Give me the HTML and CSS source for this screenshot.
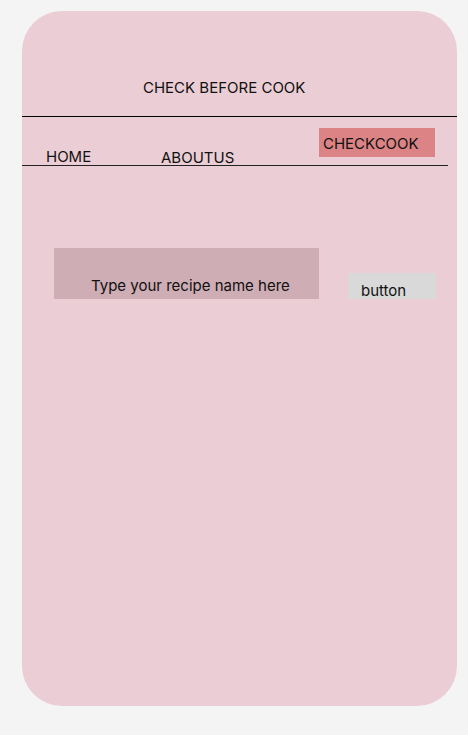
FILE: index.html
```html
<!DOCTYPE html>
<html>
<head>
<meta charset="utf-8">
<link rel="stylesheet" href="styles.css">
</head>
<body>
<div class="card">
  <header class="header"><h1 class="title">CHECK BEFORE COOK</h1></header>
  <nav class="nav">
    <span class="nav-item home">HOME</span>
    <span class="nav-item about">ABOUTUS</span>
    <span class="nav-item check">CHECKCOOK</span>
  </nav>
  <main class="search">
    <div class="input">Type your recipe name here</div>
    <div class="button">button</div>
  </main>
</div>
</body>
</html>
```
FILE: styles.css
```css
html, body { margin: 0; padding: 0; }
body {
  background: #f4f4f4;
  padding: 11px 0 0 22px;
  font-family: Inter, "Noto Sans", sans-serif;
  font-size: 15px;
  line-height: 20px;
  color: #111;
}
.card {
  width: 435px;
  height: 695px;
  border-radius: 40px;
  background: #ebcdd5;
  overflow: hidden;
}
.header {
  height: 105px;
  box-sizing: content-box;
  border-bottom: 1px solid #000;
  display: flex;
  align-items: flex-end;
  padding-left: 121px;
}
.title {
  margin: 0 0 18px 0;
  font-size: 15px;
  font-weight: 400;
  line-height: 20px;
}
.nav {
  width: 426px;
  height: 48px;
  border-bottom: 1px solid #222;
  display: flex;
  align-items: flex-start;
}
.nav-item { display: block; }
.home { width: 115px; margin: 30px 0 0 24px; }
.about { width: 158px; margin-top: 31px; }
.check {
  width: 116px;
  height: 29px;
  box-sizing: border-box;
  margin-top: 11px;
  padding: 6px 0 0 4px;
  background: #dc8485;
}
.search {
  display: flex;
  align-items: flex-start;
  margin: 82px 0 0 32px;
}
.input {
  width: 265px;
  height: 51px;
  box-sizing: border-box;
  padding: 28px 0 0 37px;
  background: #ceadb4;
}
.button {
  width: 88px;
  height: 26px;
  box-sizing: border-box;
  margin: 25px 0 0 29px;
  padding: 8px 0 0 13px;
  background: #d9d9d9;
}
```
